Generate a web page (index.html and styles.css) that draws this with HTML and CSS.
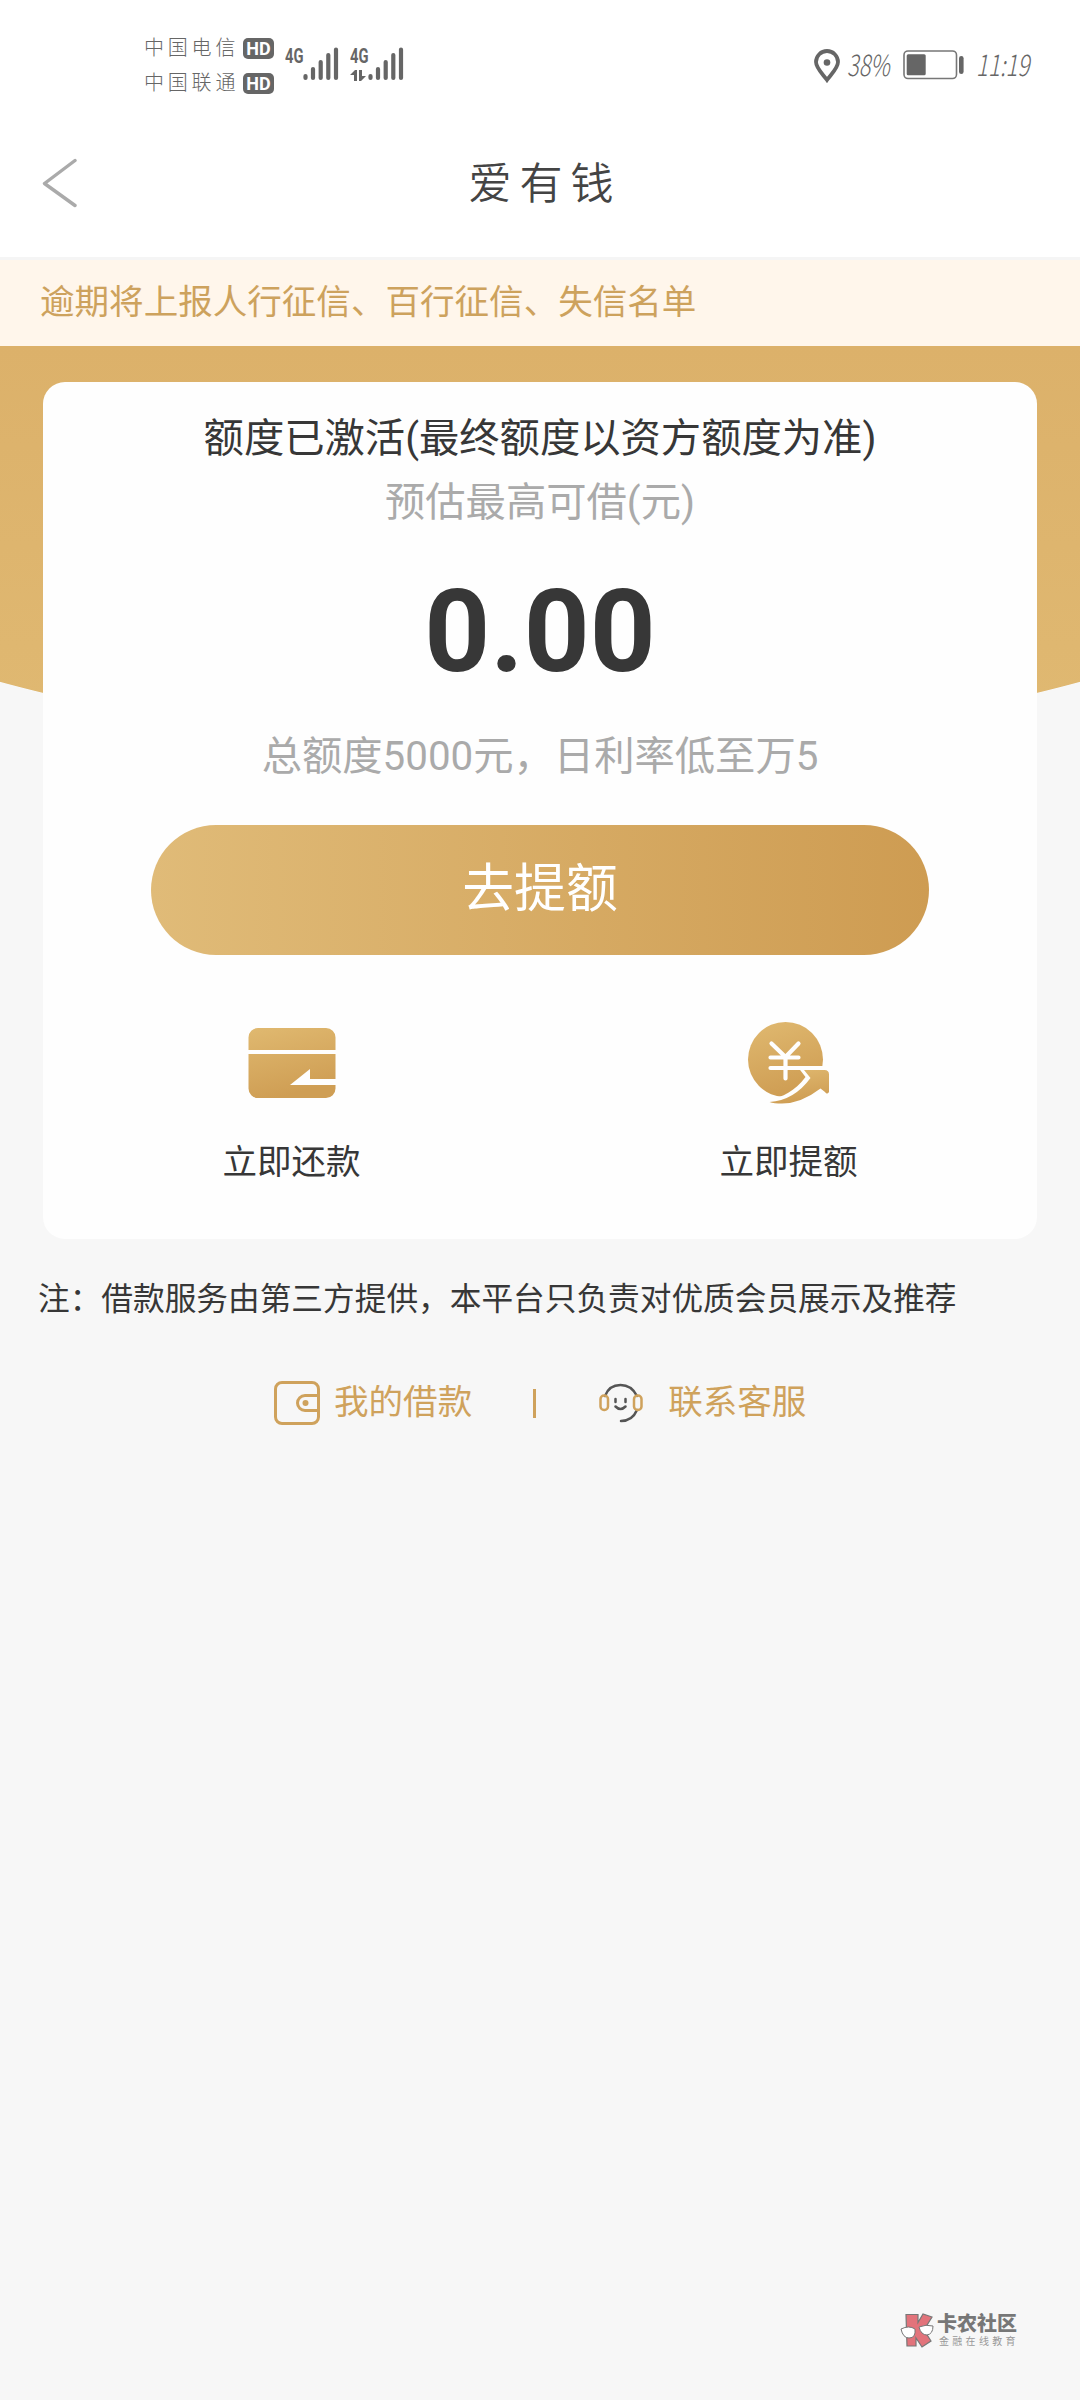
FILE: index.html
```html
<!DOCTYPE html>
<html lang="zh-CN">
<head>
<meta charset="utf-8">
<title>爱有钱</title>
<link rel="stylesheet" href="styles.css">
</head>
<body>
<header class="status">
  <div class="carriers">
    <div class="carrier"><span class="carrier-name">中国电信</span><span class="hd">HD</span></div>
    <div class="carrier"><span class="carrier-name">中国联通</span><span class="hd">HD</span></div>
  </div>
  <div class="signal">
    <span class="net">4G</span>
    <svg class="bars" width="36" height="34" viewBox="0 0 36 34"><path d="M2.500 29v2M10 22v9M17.700 15v16M25.300 8v23M33 2.500v28.500"/></svg>
  </div>
  <div class="signal">
    <span class="net">4G</span>
    <svg class="updown" width="16" height="11" viewBox="0 0 16 11"><path d="M0 5 5 0h2v11H4V5zM9 0h3v6h4l-5 5H9z"/></svg>
    <svg class="bars" width="36" height="34" viewBox="0 0 36 34"><path d="M2.500 29v2M10 22v9M17.700 15v16M25.300 8v23M33 2.500v28.500"/></svg>
  </div>
  <svg class="pin" width="26" height="34" viewBox="0 0 26 34"><path d="M13 31C9 25.500 2 19 2 13a11 11 0 0 1 22 0c0 6-7 12.500-11 18z" fill="none" stroke="#666" stroke-width="3.800"/><circle cx="13" cy="13.500" r="3.300" fill="#666"/></svg>
  <span class="percent">38%</span>
  <svg class="battery" width="61" height="30" viewBox="0 0 61 30"><rect x="1" y="1" width="52.500" height="27.500" rx="4" fill="none" stroke="#777" stroke-width="1.600"/><rect x="3.700" y="4.300" width="19" height="21" rx="1.500" fill="#666"/><rect x="56" y="6" width="4.600" height="18" rx="2.300" fill="#666"/></svg>
  <span class="clock">11:19</span>
</header>
<nav class="titlebar">
  <svg class="back" width="36" height="50" viewBox="0 0 36 50"><path d="M34 2.500 3.500 25.500l30.500 22"/></svg>
  <h1 class="title">爱有钱</h1>
</nav>
<div class="notice">逾期将上报人行征信、百行征信、失信名单</div>
<main class="main">
  <section class="card">
    <p class="activated">额度已激活(最终额度以资方额度为准)</p>
    <p class="estimate">预估最高可借(元)</p>
    <p class="amount">0.00</p>
    <p class="total">总额度5000元，日利率低至万5</p>
    <button class="raise">去提额</button>
    <div class="actions">
      <div class="action">
        <svg class="action-icon" width="88" height="84" viewBox="0 0 88 84">
          <defs><linearGradient id="gold" x1="0" y1="0" x2="0.300" y2="1"><stop offset="0" stop-color="#e0b970"/><stop offset="1" stop-color="#cf9e54"/></linearGradient></defs>
          <path fill="url(#gold)" d="M10 7h68a9.500 9.500 0 0 1 9.500 9.500V29H.500V16.500A9.500 9.500 0 0 1 10 7zM.500 33h87v25H62V48L42 64h45.500v3.500A9.500 9.500 0 0 1 78 77H10A9.500 9.500 0 0 1 .500 67.500z"/>
        </svg>
        <span>立即还款</span>
      </div>
      <div class="action">
        <svg class="action-icon" width="88" height="84" viewBox="0 0 88 84">
          <circle cx="40.500" cy="38.500" r="37.500" fill="url(#gold)"/>
          <path d="M25 77.500C37 77 50 70 60.500 56L52 45h36v38H25z" fill="#fefefe"/>
          <path d="m26.500 22.500 14 13.500 13-13.500M25.500 36.500h28M25.500 47h30M40.500 36v21.500" fill="none" stroke="#fefefe" stroke-width="4.200" stroke-linecap="round" stroke-linejoin="round"/>
          <path fill="url(#gold)" d="M59 49h20.500q4.500 0 4.500 4.500V71q-2 3-4 0l-4.500-3.500Q56 82.500 37 82.500 29 82.500 24.500 81 49 79.500 65.500 57z"/>
        </svg>
        <span>立即提额</span>
      </div>
    </div>
  </section>
  <p class="note">注：借款服务由第三方提供，本平台只负责对优质会员展示及推荐</p>
  <div class="links">
    <svg class="wallet" width="46" height="44" viewBox="0 0 46 44" fill="none" stroke="#cfa25c" stroke-width="3"><rect x="1.500" y="1.500" width="43" height="41" rx="6.500"/><path d="M44 14.500H31a7.500 7.500 0 0 0 0 15h13"/><circle cx="31.500" cy="22" r="3" fill="#cfa25c" stroke="none"/></svg>
    <span class="link-text">我的借款</span>
    <i class="divider"></i>
    <svg class="headset" width="44" height="40" viewBox="0 0 44 40" fill="none" stroke-width="2.500" stroke-linecap="round"><path d="M6 13C9 5 15 2 21.500 2S34 5 38 13M38 27c-3 7-9 11-16 11" stroke="#555"/><path d="M16.500 16v3M26.500 16v3M16.500 23.500q5 5 10 0" stroke="#555"/><rect x="1.500" y="12.500" width="7.500" height="14.500" rx="3.500" stroke="#cfa25c"/><rect x="35" y="12.500" width="7.500" height="14.500" rx="3.500" stroke="#cfa25c"/></svg>
    <span class="link-text">联系客服</span>
  </div>
</main>
<div class="brand">
  <svg width="35" height="36" viewBox="0 0 35 36"><path d="M6 1.500h12v8L23 1l9 3-8 13 7 11-9 6-6-9v8H7z" fill="#e2737b" stroke="#777" stroke-width="1.200"/><path d="M1 16q8-4 14 0 1 9-6 9-6 0-8-9zM19 14q7-3 14-1 0 8-6 9-6 0-8-8z" fill="#fff" stroke="#777"/></svg>
  <div class="brand-text"><b>卡农社区</b><small>金融在线教育</small></div>
</div>
</body>
</html>
```
FILE: styles.css
```css
* { box-sizing: border-box; }
body {
  margin: 0;
  width: 1080px;
  height: 2400px;
  position: relative;
  background: #f7f7f7;
  color: #373737;
  font-family: Roboto, "Noto Sans CJK SC", sans-serif;
}
p, h1 { margin: 0; font-weight: 400; }
svg { display: block; flex: none; }

.status {
  height: 130px;
  padding: 0 0 0 144px;
  display: flex;
  align-items: flex-start;
  background: #fff;
  color: #666;
}
.carriers { margin-top: 31px; width: 141px; }
.carrier { display: flex; align-items: center; height: 35px; }
.carrier-name {
  width: 99px;
  font-size: 20px;
  font-weight: 300;
  letter-spacing: 3.800px;
  white-space: nowrap;
  line-height: 35px;
}
.hd {
  width: 31px;
  height: 21px;
  border-radius: 5px;
  background: #666;
  color: #fff;
  font: 700 18px/21px Roboto, sans-serif;
  text-align: center;
}
.signal {
  display: grid;
  grid-template-columns: 18px 47px;
  position: relative;
  margin-top: 47px;
  height: 36px;
}
.net {
  font: 700 21px/18px Roboto, sans-serif;
  transform: scaleX(0.700);
  transform-origin: left;
}
.updown { position: absolute; left: 0; top: 23px; fill: #666; }
.bars { grid-column: 2; grid-row: 1; fill: none; stroke: #666; stroke-width: 4.200; stroke-linecap: round; }
.pin { margin: 49px 0 0 399px; }
.percent, .clock {
  font: italic 300 29px/36px "Noto Sans CJK SC", sans-serif;
  transform-origin: left;
  white-space: nowrap;
}
.percent { margin: 45px 0 0 7px; width: 56px; transform: scaleX(0.750); }
.battery { margin-top: 50px; }
.clock { margin: 45px 0 0 12px; transform: scaleX(0.770); }

.titlebar {
  height: 130px;
  padding: 0 41px;
  border-bottom: 3px solid #f5f5f5;
  background: #fff;
  display: grid;
  grid-template-columns: 36px 1fr 36px;
}
.back { margin-top: 28px; fill: none; stroke: #aaa; stroke-width: 3.400; stroke-linecap: round; stroke-linejoin: round; }
.title {
  font-size: 43px;
  font-weight: 350;
  letter-spacing: 8px;
  line-height: 108px;
  padding-left: 10px;
  text-align: center;
  color: #444;
}

.notice {
  height: 86px;
  padding-left: 40px;
  background: #fff6eb;
  color: #cda25d;
  font-size: 34.560px;
  line-height: 84px;
}

.main {
  padding: 36px 43px 0;
  background: radial-gradient(ellipse 980px 403px at 50% 0, transparent 99.800%, #f7f7f7 100%), linear-gradient(#dcb16a, #e0b972 400px);
}
.card {
  height: 857px;
  border-radius: 22px;
  background: #fefefe;
  display: flex;
  flex-direction: column;
  align-items: center;
  padding-top: 25px;
}
.activated, .estimate, .total { font-size: 40.320px; line-height: 64px; }
.estimate, .total { color: #aaa; }
.amount { margin-top: 37px; font-size: 115px; line-height: 120px; font-weight: 700; }
.total { margin-top: 33px; }
.raise {
  margin-top: 36px;
  width: 778px;
  height: 130px;
  padding: 0;
  border: 0;
  border-radius: 65px;
  background: linear-gradient(90deg, #e0bb78, #ce9c52);
  color: #fff;
  font: 400 51.800px/130px Roboto, "Noto Sans CJK SC", sans-serif;
}
.actions { width: 994px; margin-top: 66px; display: grid; grid-template-columns: 1fr 1fr; }
.action { display: flex; flex-direction: column; align-items: center; font-size: 34.560px; line-height: 50px; }
.action span { margin-top: 32px; }
.note { margin: 36px -6px 0 -5px; font-size: 31.680px; line-height: 50px; white-space: nowrap; }
.links { display: flex; align-items: center; height: 50px; margin: 53px 0 0 231px; color: #cfa25c; }
.link-text { font-size: 34.560px; line-height: 50px; position: relative; top: -1px; left: -1px; }
.wallet { margin-right: 15px; }
.divider { width: 3px; height: 29px; background: #cfa25c; margin: 0 63px 0 60px; }
.headset { margin-right: 26px; }

.brand { position: absolute; left: 900px; top: 2313px; display: flex; gap: 2px; color: #777; }
.brand-text { display: flex; flex-direction: column; white-space: nowrap; }
.brand b { font-size: 20px; line-height: 22px; font-weight: 900; }
.brand small { font-size: 10px; line-height: 12px; letter-spacing: 3.300px; margin: 1px 0 0 2px; color: #999; }
```
